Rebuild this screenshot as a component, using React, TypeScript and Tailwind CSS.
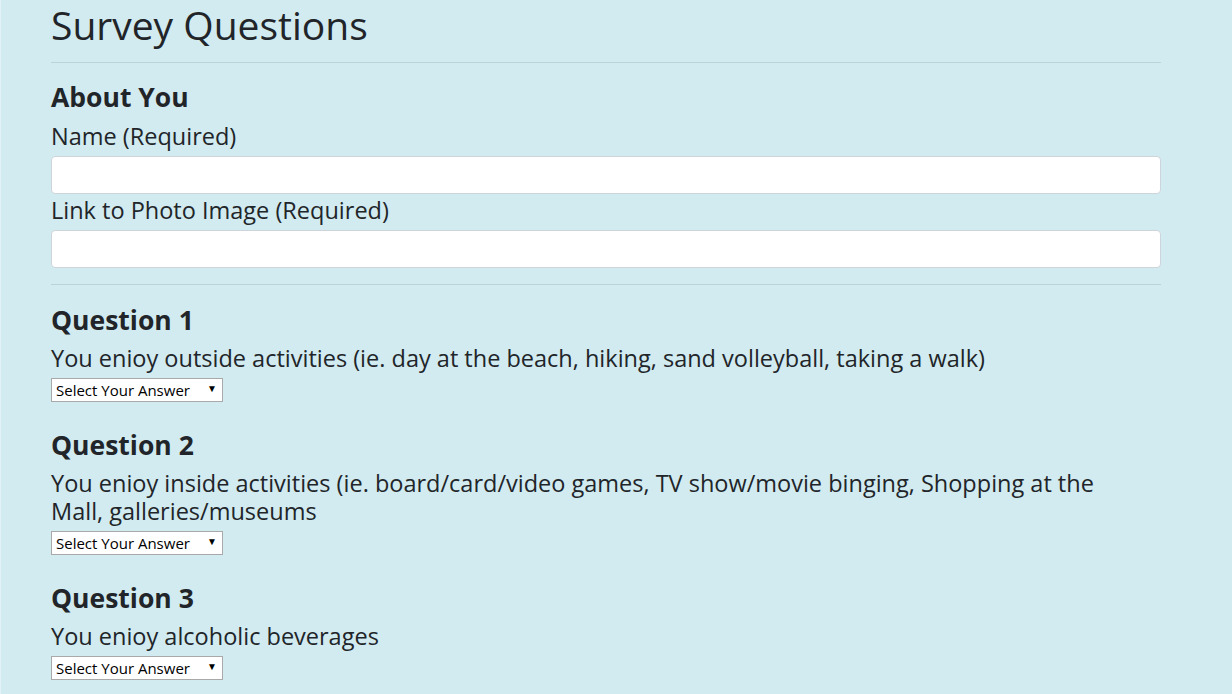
const questions = [
  {
    title: "Question 1",
    text: "You enioy outside activities (ie. day at the beach, hiking, sand volleyball, taking a walk)",
  },
  {
    title: "Question 2",
    text: "You enioy inside activities (ie. board/card/video games, TV show/movie binging, Shopping at the Mall, galleries/museums",
  },
  {
    title: "Question 3",
    text: "You enioy alcoholic beverages",
  },
];

function AnswerSelect() {
  return (
    <div className="relative w-[172px] h-6">
      <select className="appearance-none w-full h-full bg-white border border-[#a9a9a9] pl-1 text-[15px] leading-[22px] text-black font-['Open_Sans',sans-serif]">
        <option>Select Your Answer</option>
        <option>1 (Strongly Disagree)</option>
        <option>2</option>
        <option>3</option>
        <option>4</option>
        <option>5 (Strongly Agree)</option>
      </select>
      <span className="absolute right-[6px] top-[5px] text-[10px] leading-none text-black pointer-events-none">▼</span>
    </div>
  );
}

export default function App() {
  return (
    <div className="min-h-screen bg-[#d2ebf0] text-[#212529] font-['Open_Sans',sans-serif] border-l border-[#e2f2f5]">
      <div className="w-[1110px] ml-[50px]">
        {/* Title */}
        <h1 className="text-[39px] leading-[48px] pt-[1px] mb-[13px] font-normal">Survey Questions</h1>
        <hr className="border-t border-[#b9d3d8]" />

        {/* About You */}
        <section className="pt-[17px]">
          <h3 className="text-[26.5px] leading-[34px] font-bold mb-[6px]">About You</h3>
          <label className="block text-[23.5px] pt-[4px] leading-[24px] mb-2">Name (Required)</label>
          <input className="block w-full h-[38px] bg-white border border-[#ced4da] rounded" />
          <label className="block text-[23.5px] pt-[4px] leading-[24px] mb-2">Link to Photo Image (Required)</label>
          <input className="block w-full h-[38px] bg-white border border-[#ced4da] rounded" />
        </section>
        <hr className="border-t border-[#b9d3d8] mt-4" />

        {/* Questions */}
        <div className="pt-[18px]">
          {questions.map((q) => (
            <section key={q.title} className="mb-[26px]">
              <h3 className="text-[26.5px] leading-[34px] font-bold mb-[6px]">{q.title}</h3>
              <p className="text-[23.5px] leading-[28px] pt-[1px] mb-[6px] pr-[60px]">{q.text}</p>
              <AnswerSelect />
            </section>
          ))}
        </div>
      </div>
    </div>
  );
}
